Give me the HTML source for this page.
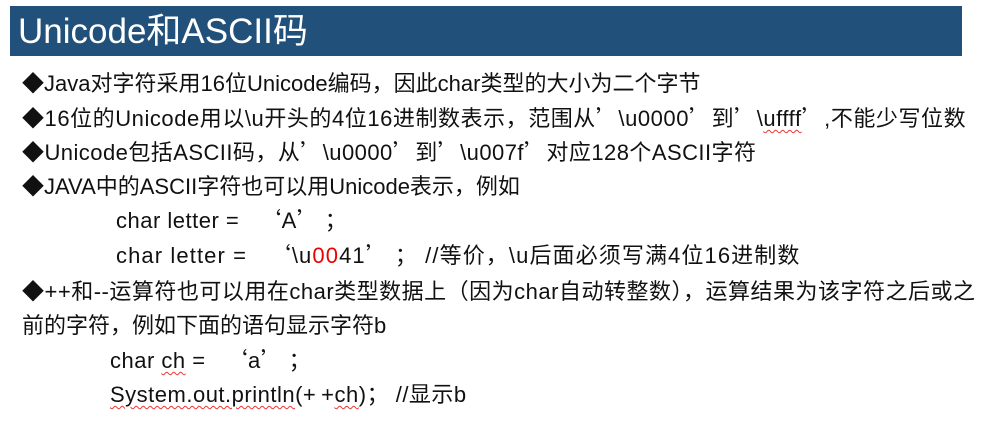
<!DOCTYPE html>
<html><head><meta charset="utf-8"><style>
body{margin:0;width:1002px;height:426px;background:#fff;overflow:hidden;position:relative;font-family:"Liberation Sans","Noto Sans CJK SC",sans-serif;color:#111}
.bar{position:absolute;left:10px;top:6px;width:952px;height:50px;background:#21507a}
.title{position:absolute;left:18px;top:8px;color:#fff;font-size:35px;line-height:48px}
.l{position:absolute;font-size:22px;line-height:26px;white-space:nowrap}
.q{font-family:"Noto Sans CJK SC",sans-serif;line-height:0}
.r{color:#e00}
.w{text-decoration:underline wavy #e33;text-decoration-thickness:1px;text-underline-offset:3px}
</style></head><body>
<div class="bar"></div>
<div class="title">Unicode和ASCII码</div>
<div class="l" style="left:22px;top:71px">◆Java对字符采用16位Unicode编码，因此char类型的大小为二个字节</div>
<div class="l" style="left:22px;top:106px;letter-spacing:0.55px">◆16位的Unicode用以\u开头的4位16进制数表示，范围从<span class="q">’</span>\u0000<span class="q">’</span>到<span class="q">’</span>\<span class="w">uffff</span><span class="q">’</span>,不能少写位数</div>
<div class="l" style="left:22px;top:140px;letter-spacing:0.45px">◆Unicode包括ASCII码，从<span class="q">’</span>\u0000<span class="q">’</span>到<span class="q">’</span>\u007f<span class="q">’</span>对应128个ASCII字符</div>
<div class="l" style="left:22px;top:174px">◆JAVA中的ASCII字符也可以用Unicode表示，例如</div>
<div class="l" style="left:116px;top:208px;letter-spacing:0.5px">char letter =&nbsp;&nbsp;&nbsp;<span class="q">‘</span>A<span class="q">’ ；</span></div>
<div class="l" style="left:116px;top:243px;letter-spacing:1.1px">char letter =&nbsp;&nbsp;&nbsp;<span class="q">‘</span>\u<span class="r">00</span>41<span class="q">’ ；</span>&nbsp;//等价，\u后面必须写满4位16进制数</div>
<div class="l" style="left:22px;top:279px;letter-spacing:0.5px">◆++和--运算符也可以用在char类型数据上（因为char自动转整数），运算结果为该字符之后或之</div>
<div class="l" style="left:22px;top:313px">前的字符，例如下面的语句显示字符b</div>
<div class="l" style="left:110px;top:348px;letter-spacing:0.5px">char <span class="w">ch</span> =&nbsp;&nbsp;&nbsp;<span class="q">‘</span>a<span class="q">’ ；</span></div>
<div class="l" style="left:110px;top:382px;letter-spacing:0.5px"><span class="w">System.out.println</span>(+&thinsp;+<span class="w">ch</span>)；&nbsp;//显示b</div>
</body></html>
